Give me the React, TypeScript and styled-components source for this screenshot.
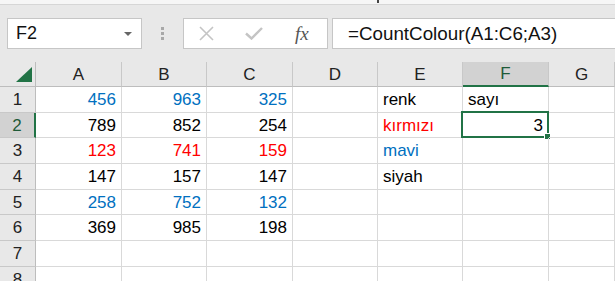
import React from "react";
import styled, { createGlobalStyle } from "styled-components";

const GlobalStyle = createGlobalStyle`
  html, body {
    margin: 0;
    padding: 0;
    background: #ffffff;
    overflow: hidden;
  }
  body {
    width: 615px;
    height: 281px;
    font-family: "Liberation Sans", Arial, sans-serif;
  }
`;

const green = "#217346";
const blue = "#0070c0";
const red = "#ff0000";

const Page = styled.div`
  width: 615px;
  height: 281px;
  display: flex;
  flex-direction: column;
  overflow: hidden;
  & > * {
    flex-shrink: 0;
  }
`;

const TopStrip = styled.div`
  height: 4px;
  background: #f6f6f6;
  border-bottom: 1px solid #d6d6d6;
  position: relative;
`;

const Caret = styled.span`
  position: absolute;
  left: 377px;
  top: 0;
  width: 2px;
  height: 3px;
  background: #444;
`;

const FormulaBar = styled.div`
  height: 57px;
  background: #e8e8e8;
  display: flex;
  align-items: center;
  padding-left: 7px;
  box-sizing: border-box;
`;

const NameBox = styled.div`
  width: 135px;
  height: 31px;
  box-sizing: border-box;
  background: #fff;
  border: 1px solid #c6c6c6;
  display: flex;
  align-items: center;
  justify-content: space-between;
  padding: 0 9px 0 8px;
  font-size: 18px;
  color: #111;
`;

const DropArrow = styled.span`
  width: 0;
  height: 0;
  border-left: 4px solid transparent;
  border-right: 4px solid transparent;
  border-top: 4px solid #666;
`;

const Grip = styled.div`
  width: 41px;
  display: flex;
  flex-direction: column;
  align-items: center;
  gap: 2px;
  span {
    width: 3px;
    height: 3px;
    background: #a8a8a8;
  }
`;

const ButtonBox = styled.div`
  width: 145px;
  height: 31px;
  box-sizing: border-box;
  background: #fff;
  border: 1px solid #c6c6c6;
  display: flex;
  align-items: center;
  padding-left: 14px;
  gap: 30px;
`;

const FxLabel = styled.span`
  font-family: "Liberation Serif", "Times New Roman", serif;
  font-style: italic;
  font-size: 19px;
  color: #555;
  margin-left: 2px;
`;

const FormulaInput = styled.div`
  flex: 1;
  height: 31px;
  margin-left: 4px;
  box-sizing: border-box;
  background: #fff;
  border: 1px solid #c6c6c6;
  border-right: none;
  display: flex;
  align-items: center;
  padding-left: 15px;
  font-size: 18.8px;
  color: #111;
`;

const Sheet = styled.div`
  display: grid;
  grid-template-columns: 36px 86px 85px 86px 85px 85px 86px 1fr;
  grid-template-rows: 25px;
  grid-auto-rows: 25.7px;
  font-size: 17px;
`;

type CellProps = { $align?: "left" | "right"; $color?: string };

const Cell = styled.div<CellProps>`
  position: relative;
  box-sizing: border-box;
  border-right: 1px solid #d9d9d9;
  border-bottom: 1px solid #d9d9d9;
  display: flex;
  align-items: center;
  justify-content: ${(p) => (p.$align === "right" ? "flex-end" : "flex-start")};
  padding: 1px 5px 0;
  color: ${(p) => p.$color || "#000"};
  white-space: nowrap;
`;

const ColHead = styled.div<{ $active?: boolean }>`
  box-sizing: border-box;
  background: ${(p) => (p.$active ? "#d2d2d2" : "#e8e8e8")};
  border-right: 1px solid #c8c8c8;
  border-bottom: ${(p) => (p.$active ? `2px solid ${green}` : "1px solid #bdbdbd")};
  display: flex;
  align-items: center;
  justify-content: center;
  color: ${(p) => (p.$active ? "#1e5a38" : "#222")};
  padding-top: 1px;
`;

const RowHead = styled.div<{ $active?: boolean }>`
  box-sizing: border-box;
  background: ${(p) => (p.$active ? "#d2d2d2" : "#e8e8e8")};
  border-right: ${(p) => (p.$active ? `2px solid ${green}` : "1px solid #bdbdbd")};
  border-bottom: 1px solid #c8c8c8;
  display: flex;
  align-items: center;
  justify-content: center;
  color: ${(p) => (p.$active ? "#1e5a38" : "#222")};
  padding-top: 1px;
`;

const Corner = styled.div`
  background: #e8e8e8;
  border-right: 1px solid #bdbdbd;
  border-bottom: 1px solid #bdbdbd;
  box-sizing: border-box;
  display: flex;
  align-items: flex-end;
  justify-content: flex-end;
  padding: 0 3px 4px 0;
`;

const SelectionFrame = styled.div`
  position: absolute;
  left: -2px;
  top: -2px;
  right: -1px;
  bottom: -1px;
  border: 2px solid ${green};
  pointer-events: none;
`;

const FillHandle = styled.div`
  position: absolute;
  right: -4px;
  bottom: -4px;
  width: 5px;
  height: 5px;
  background: ${green};
  border: 1px solid #fff;
`;

type CellData = { v: string; c?: string; left?: boolean };

const rows: CellData[][] = [
  [{ v: "456", c: blue }, { v: "963", c: blue }, { v: "325", c: blue }, { v: "" }, { v: "renk", left: true }, { v: "sayı", left: true }, { v: "" }],
  [{ v: "789" }, { v: "852" }, { v: "254" }, { v: "" }, { v: "kırmızı", c: red, left: true }, { v: "3" }, { v: "" }],
  [{ v: "123", c: red }, { v: "741", c: red }, { v: "159", c: red }, { v: "" }, { v: "mavi", c: blue, left: true }, { v: "" }, { v: "" }],
  [{ v: "147" }, { v: "157" }, { v: "147" }, { v: "" }, { v: "siyah", left: true }, { v: "" }, { v: "" }],
  [{ v: "258", c: blue }, { v: "752", c: blue }, { v: "132", c: blue }, { v: "" }, { v: "" }, { v: "" }, { v: "" }],
  [{ v: "369" }, { v: "985" }, { v: "198" }, { v: "" }, { v: "" }, { v: "" }, { v: "" }],
  [{ v: "" }, { v: "" }, { v: "" }, { v: "" }, { v: "" }, { v: "" }, { v: "" }],
  [{ v: "" }, { v: "" }, { v: "" }, { v: "" }, { v: "" }, { v: "" }, { v: "" }],
];

const columns = ["A", "B", "C", "D", "E", "F", "G"];

const App: React.FC = () => {
  return (
    <Page>
      <GlobalStyle />
      <TopStrip>
        <Caret />
      </TopStrip>
      <FormulaBar>
        <NameBox>
          <span>F2</span>
          <DropArrow />
        </NameBox>
        <Grip>
          <span />
          <span />
          <span />
        </Grip>
        <ButtonBox>
          <svg width="17" height="15" viewBox="0 0 17 15">
            <path d="M2 1 L15 14 M15 1 L2 14" stroke="#c4c4c4" strokeWidth="1.6" fill="none" />
          </svg>
          <svg width="18" height="13" viewBox="0 0 18 13">
            <path d="M1 6.5 L6.5 11.5 L17 1" stroke="#c4c4c4" strokeWidth="2.4" fill="none" />
          </svg>
          <FxLabel>fx</FxLabel>
        </ButtonBox>
        <FormulaInput>=CountColour(A1:C6;A3)</FormulaInput>
      </FormulaBar>
      <Sheet>
        <Corner>
          <svg width="16" height="15" viewBox="0 0 16 15">
            <path d="M16 0 L16 15 L0 15 Z" fill={green} />
          </svg>
        </Corner>
        {columns.map((c) => (
          <ColHead key={c} $active={c === "F"}>
            {c}
          </ColHead>
        ))}
        {rows.map((r, i) => (
          <React.Fragment key={i}>
            <RowHead $active={i === 1}>{i + 1}</RowHead>
            {r.map((cell, j) => (
              <Cell key={j} $align={cell.left ? "left" : "right"} $color={cell.c}>
                {cell.v}
                {i === 1 && j === 5 && (
                  <SelectionFrame>
                    <FillHandle />
                  </SelectionFrame>
                )}
              </Cell>
            ))}
          </React.Fragment>
        ))}
      </Sheet>
    </Page>
  );
};

export default App;
